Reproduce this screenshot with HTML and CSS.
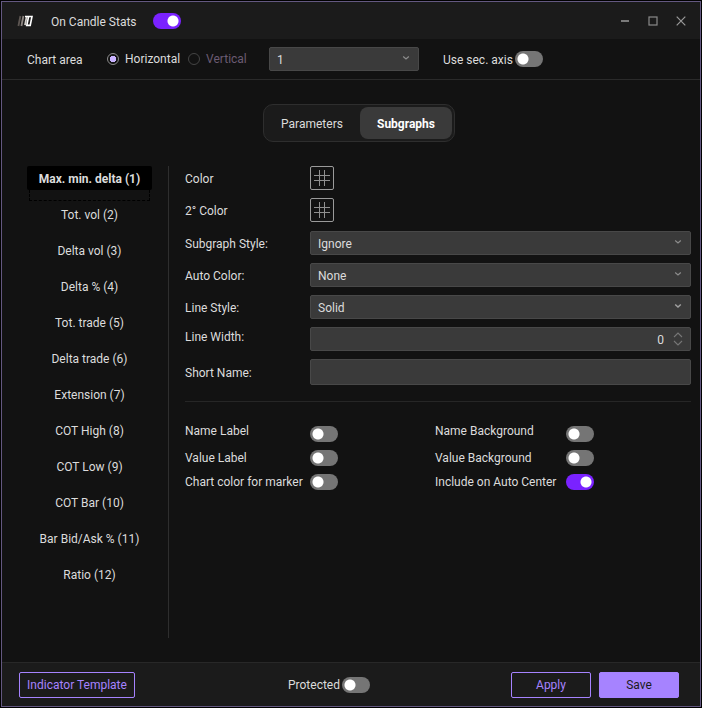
FILE: index.html
```html
<!DOCTYPE html>
<html lang="en">
<head>
    <meta charset="UTF-8">
    <meta name="viewport" content="width=device-width, initial-scale=1.0">
    <title>On Candle Stats</title>
    <link rel="stylesheet" href="styles.css">
</head>
<body>
    <div class="window">
        <header class="titlebar">
            <svg class="logo" width="18" height="12" viewBox="0 0 18 12" aria-hidden="true">
                <path d="M3.4 1 L1.4 11" stroke="#5d5652" stroke-width="1.8"/>
                <path d="M6.4 1 L4.4 11" stroke="#8d8682" stroke-width="1.8"/>
                <path d="M9.6 1.8 L8 10.2" stroke="#d4d0cc" stroke-width="1.8"/>
                <path d="M8 1.5 H15 L13.2 10.4 H9.8 L11.6 1.5" fill="none" stroke="#fff" stroke-width="1.6"/>
            </svg>
            <label class="title" for="enabled">On Candle Stats</label>
            <input class="switch" type="checkbox" id="enabled" checked>
            <div class="window-controls">
                <button class="window-button" aria-label="Minimize">
                    <svg width="12" height="12" viewBox="0 0 12 12"><path d="M2 6h8" stroke="#7a7a7a" stroke-width="2"/></svg>
                </button>
                <button class="window-button" aria-label="Maximize">
                    <svg width="12" height="12" viewBox="0 0 12 12"><rect x="2" y="2" width="8" height="8" fill="none" stroke="#8a8a8a" stroke-width="1.2"/></svg>
                </button>
                <button class="window-button" aria-label="Close">
                    <svg width="12" height="12" viewBox="0 0 12 12"><path d="M1.7 1.7l8.6 8.6M10.3 1.7l-8.6 8.6" stroke="#9a9a9a" stroke-width="1.2"/></svg>
                </button>
            </div>
        </header>

        <div class="toolbar">
            <span class="toolbar-label">Chart area</span>
            <div class="radios">
                <label class="radio"><input type="radio" name="orientation" checked>Horizontal</label>
                <label class="radio muted"><input type="radio" name="orientation">Vertical</label>
            </div>
            <div class="select-wrap area-select">
                <select class="field" aria-label="Chart area">
                    <option>1</option>
                </select>
                <svg class="chevron" width="8" height="6" viewBox="0 0 8 6"><path d="M1.2 1.5 L4 4 L6.8 1.5" fill="none" stroke="#8c8c8c" stroke-width="1.2"/></svg>
            </div>
            <div class="switch-row">
                <label for="sec-axis">Use sec. axis</label>
                <input class="switch" type="checkbox" id="sec-axis">
            </div>
        </div>

        <main class="main">
            <nav class="tabs">
                <button class="tab">Parameters</button>
                <button class="tab active">Subgraphs</button>
            </nav>

            <div class="panel">
                <ul class="subgraphs">
                    <li><button class="subgraph active">Max. min. delta (1)</button></li>
                    <li><button class="subgraph">Tot. vol (2)</button></li>
                    <li><button class="subgraph">Delta vol (3)</button></li>
                    <li><button class="subgraph">Delta % (4)</button></li>
                    <li><button class="subgraph">Tot. trade (5)</button></li>
                    <li><button class="subgraph">Delta trade (6)</button></li>
                    <li><button class="subgraph">Extension (7)</button></li>
                    <li><button class="subgraph">COT High (8)</button></li>
                    <li><button class="subgraph">COT Low (9)</button></li>
                    <li><button class="subgraph">COT Bar (10)</button></li>
                    <li><button class="subgraph">Bar Bid/Ask % (11)</button></li>
                    <li><button class="subgraph">Ratio (12)</button></li>
                </ul>

                <div class="settings">
                    <div class="form colors">
                        <label for="color1">Color</label>
                        <button class="color-button" id="color1">
                            <svg width="16" height="16" viewBox="0 0 16 16"><path d="M5.5 0v16M10.5 0v16M0 5.5h16M0 10.5h16" stroke="#8f8f8f"/></svg>
                        </button>
                        <label for="color2">2° Color</label>
                        <button class="color-button" id="color2">
                            <svg width="16" height="16" viewBox="0 0 16 16"><path d="M5.5 0v16M10.5 0v16M0 5.5h16M0 10.5h16" stroke="#8f8f8f"/></svg>
                        </button>
                    </div>
                    <div class="form">
                        <label for="subgraph-style">Subgraph Style:</label>
                        <div class="select-wrap">
                            <select class="field" id="subgraph-style">
                                <option>Ignore</option>
                            </select>
                            <svg class="chevron" width="8" height="6" viewBox="0 0 8 6"><path d="M1.2 1.5 L4 4 L6.8 1.5" fill="none" stroke="#8c8c8c" stroke-width="1.2"/></svg>
                        </div>
                        <label for="auto-color">Auto Color:</label>
                        <div class="select-wrap">
                            <select class="field" id="auto-color">
                                <option>None</option>
                            </select>
                            <svg class="chevron" width="8" height="6" viewBox="0 0 8 6"><path d="M1.2 1.5 L4 4 L6.8 1.5" fill="none" stroke="#8c8c8c" stroke-width="1.2"/></svg>
                        </div>
                        <label for="line-style">Line Style:</label>
                        <div class="select-wrap">
                            <select class="field" id="line-style">
                                <option>Solid</option>
                            </select>
                            <svg class="chevron" width="8" height="6" viewBox="0 0 8 6"><path d="M1.2 1.5 L4 4 L6.8 1.5" fill="none" stroke="#a0a0a0" stroke-width="1.5"/></svg>
                        </div>
                        <label class="raised" for="line-width">Line Width:</label>
                        <div class="select-wrap">
                            <input class="field number" type="number" id="line-width" value="0">
                            <svg class="spinner" width="10" height="14" viewBox="0 0 10 14"><path d="M1 5 L5 1 L9 5 M1 9 L5 13 L9 9" fill="none" stroke="#777" stroke-width="1.1"/></svg>
                        </div>
                        <label for="short-name">Short Name:</label>
                        <input class="field tall" type="text" id="short-name">
                    </div>

                    <hr class="divider">

                    <div class="toggles">
                        <label class="raised" for="name-label">Name Label</label>
                        <input class="switch" type="checkbox" id="name-label">
                        <label class="raised" for="name-background">Name Background</label>
                        <input class="switch" type="checkbox" id="name-background">
                        <label for="value-label">Value Label</label>
                        <input class="switch" type="checkbox" id="value-label">
                        <label for="value-background">Value Background</label>
                        <input class="switch" type="checkbox" id="value-background">
                        <label for="marker-color">Chart color for marker</label>
                        <input class="switch" type="checkbox" id="marker-color">
                        <label for="auto-center">Include on Auto Center</label>
                        <input class="switch" type="checkbox" id="auto-center" checked>
                    </div>
                </div>
            </div>
        </main>

        <footer class="footer">
            <button class="button template">Indicator Template</button>
            <div class="switch-row">
                <label for="protected">Protected</label>
                <input class="switch" type="checkbox" id="protected">
            </div>
            <div class="actions">
                <button class="button">Apply</button>
                <button class="button primary">Save</button>
            </div>
        </footer>
    </div>
</body>
</html>
```
FILE: styles.css
```css
* {
    box-sizing: border-box;
}
body {
    margin: 0;
    padding: 1px;
    background: #000;
    color: #dcdcdc;
    font-family: Roboto, "Open Sans", sans-serif;
    font-size: 12px;
    line-height: 16px;
}
button, input, select {
    font: inherit;
    color: inherit;
    margin: 0;
}
button {
    padding: 0;
    border: none;
    background: none;
    cursor: pointer;
}
svg {
    display: block;
}
.window {
    display: flex;
    flex-direction: column;
    min-height: calc(100vh - 2px);
    border: 1px solid #635880;
    background: #121212;
}
.titlebar {
    display: flex;
    align-items: center;
    height: 37px;
    padding: 0 13px 0 15px;
    background: #1b1b1b;
}
.title {
    width: 102px;
    padding-top: 2px;
    margin-left: 16px;
    white-space: nowrap;
}
.window-controls {
    display: flex;
    gap: 16px;
    margin-left: auto;
}
.window-button {
    width: 12px;
    height: 12px;
}
.toolbar {
    display: flex;
    align-items: center;
    height: 41px;
    padding-left: 25px;
    border-bottom: 1px solid #2a2a2a;
    white-space: nowrap;
}
.toolbar-label {
    width: 80px;
    padding-top: 2px;
}
.radios {
    display: flex;
    gap: 8px;
    width: 162px;
}
.radio {
    display: flex;
    align-items: center;
    gap: 6px;
}
.radio input {
    appearance: none;
    width: 12px;
    height: 12px;
    border: 1px solid #8a8a8a;
    border-radius: 50%;
}
.radio input:checked {
    background: radial-gradient(circle, #c9b2ff 0 3px, transparent 3px);
}
.muted {
    color: #6b5b73;
}
.radio.muted input {
    border-color: #444;
}
.select-wrap {
    position: relative;
}
.area-select {
    width: 150px;
    margin-right: 24px;
}
.field {
    display: block;
    appearance: none;
    width: 100%;
    height: 24px;
    padding: 2px 7px 0;
    border: 1px solid #484848;
    border-radius: 2px;
    background: #3a3a3a;
    outline: none;
}
.tall {
    height: 26px;
}
.number {
    appearance: textfield;
    padding-right: 26px;
    text-align: right;
}
.number::-webkit-inner-spin-button {
    appearance: none;
}
.chevron {
    position: absolute;
    top: 8px;
    right: 9px;
    pointer-events: none;
}
.spinner {
    position: absolute;
    top: 5px;
    right: 8px;
    pointer-events: none;
}
.switch-row {
    display: flex;
    align-items: center;
    gap: 2px;
}
.toolbar .switch-row label {
    padding-top: 2px;
}
.switch {
    appearance: none;
    width: 28px;
    height: 16px;
    border-radius: 8px;
    background: radial-gradient(circle at 8px 8px, #fff 5px, transparent 6px) #757575;
}
.switch:checked {
    background: radial-gradient(circle at 20px 8px, #fff 5px, transparent 6px) #7a22ff;
}
.main {
    flex: 1;
    display: flex;
    flex-direction: column;
    padding: 24px 9px 24px 25px;
}
.tabs {
    display: flex;
    gap: 2px;
    align-self: center;
    padding: 2px;
    border: 1px solid #2e2e2e;
    border-radius: 10px;
    background: #1b1b1b;
}
.tab {
    width: 92px;
    height: 32px;
    padding-top: 2px;
    border-radius: 8px;
}
.tab.active {
    background: #3a3a3a;
    color: #fff;
    font-weight: bold;
}
.panel {
    flex: 1;
    display: flex;
    margin-top: 24px;
}
.subgraphs {
    display: flex;
    flex-direction: column;
    gap: 12px;
    width: 142px;
    margin: 0;
    padding: 0 16px 0 0;
    border-right: 1px solid #2e2e2e;
    list-style: none;
}
.subgraph {
    display: block;
    width: 100%;
    height: 24px;
    padding-top: 2px;
    border-radius: 2px;
    white-space: nowrap;
}
.subgraph.active {
    position: relative;
    background: #000;
    font-weight: bold;
}
.subgraph.active::after {
    content: "";
    position: absolute;
    top: 24px;
    left: 2px;
    right: 2px;
    height: 10px;
    border: 1px dashed #000;
    border-top: none;
}
.settings {
    flex: 1;
    padding-left: 16px;
}
.form {
    display: grid;
    grid-template-columns: 125px 1fr;
    gap: 8px 0;
    align-items: center;
}
.form label {
    padding-top: 2px;
}
.colors {
    margin-bottom: 9px;
}
.raised {
    align-self: start;
}
.color-button {
    display: grid;
    place-items: center;
    width: 24px;
    height: 24px;
    border: 1px solid #9a9a9a;
    border-radius: 2px;
}
.divider {
    margin: 16px 0 21px;
    border: none;
    border-top: 1px solid #262626;
}
.toggles {
    display: grid;
    grid-template-columns: 125px 125px 131px 28px;
    grid-template-rows: 19px;
    gap: 8px 0;
    align-items: end;
    white-space: nowrap;
}
.footer {
    display: flex;
    align-items: center;
    height: 44px;
    padding: 0 21px 0 17px;
    border-top: 1px solid #282828;
    background: #1b1b1b;
}
.button {
    width: 80px;
    height: 26px;
    border: 1px solid #a683ff;
    border-radius: 2px;
    color: #a683ff;
    white-space: nowrap;
}
.button.template {
    width: 116px;
    margin-right: 153px;
}
.button.primary {
    background: #a683ff;
    color: #1b1b1b;
}
.actions {
    display: flex;
    gap: 8px;
    margin-left: auto;
}
```
